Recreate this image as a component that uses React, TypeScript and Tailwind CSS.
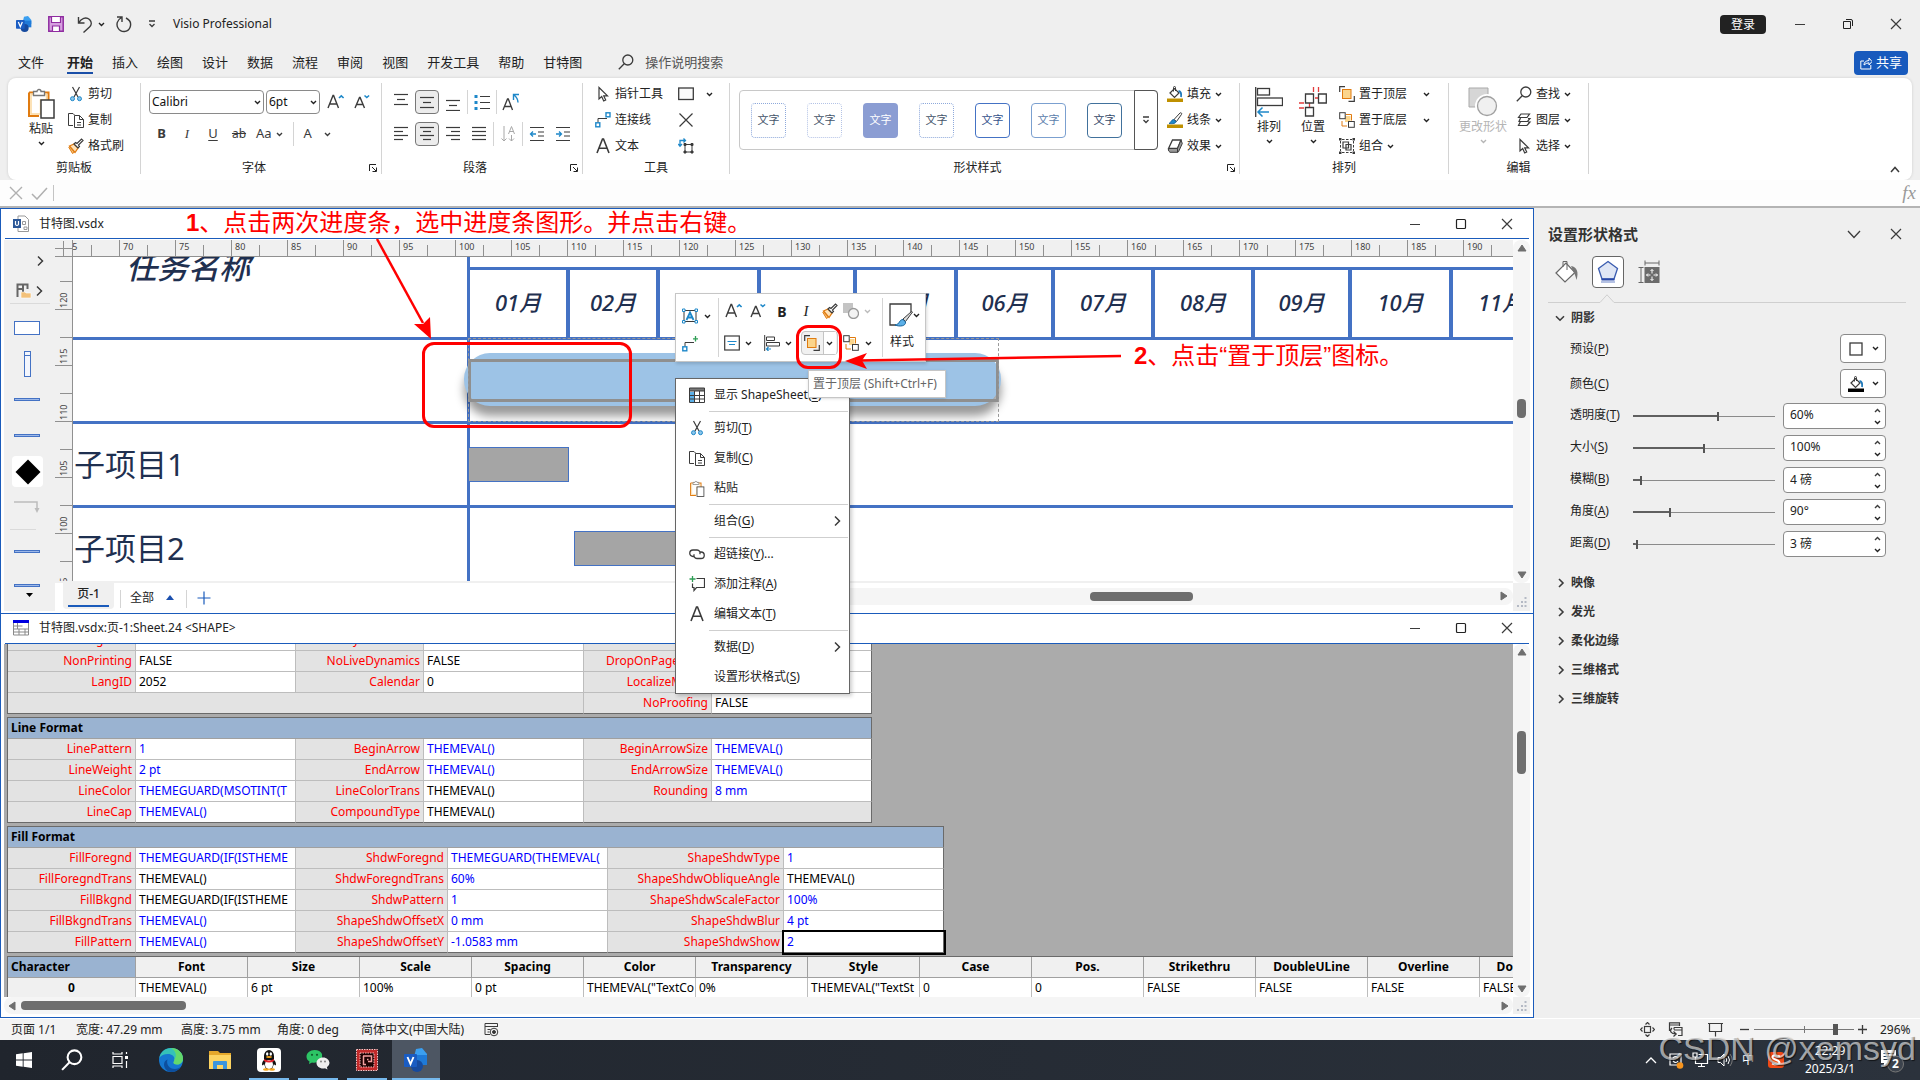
import React from "react";

type Kids = { children?: React.ReactNode };

/* ---------- small drawing helpers ---------- */
function Svg({ w = 16, h = 16, vb, className = "", children }: Kids & { w?: number; h?: number; vb?: string; className?: string }) {
  return (
    <svg width={w} height={h} viewBox={vb ?? `0 0 ${w} ${h}`} fill="none" stroke="#3b3b3b" aria-hidden="true" className={`block shrink-0 ${className}`}>
      {children}
    </svg>
  );
}
const Caret = ({ className = "" }: { className?: string }) => (
  <Svg w={7} h={5} className={className}><path d="M1 1l2.500 2.500L6 1" stroke="currentColor" strokeWidth="1.400" /></Svg>
);
const CaretUp = () => <Svg w={7} h={5}><path d="M1 4l2.500-2.500L6 4" strokeWidth="1.400" /></Svg>;
const ChevR = () => <Svg w={7} h={12}><path d="M1 1.500l4.500 4.500L1 10.500" strokeWidth="1.500" /></Svg>;

const Cut = () => (
  <Svg><path d="M4.500 1l5.500 10M11.500 1L6 11" strokeWidth="1.200" /><circle cx="4.500" cy="12.700" r="2" stroke="#1e88c9" fill="#8cc5ea" /><circle cx="11.500" cy="12.700" r="2" stroke="#1e88c9" fill="#8cc5ea" /></Svg>
);
const Copy = () => (
  <Svg><path d="M5 13.500H.5v-12H5l2 2" /><path d="M6.500 3.500h5l4 4v8h-9zM11.500 3.500v4h4M9 10.500h4M9 13h4" fill="#fff" /></Svg>
);
const Brush = () => (
  <Svg><path d="M1.500 8.500l5 5.500-2 1.500L.8 9.200z" fill="#f7c37b" stroke="#e07b10" /><path d="M1.500 8l4.500-2 4 4-3 4.500z" fill="#ffe2b8" stroke="#e07b10" strokeWidth="1.300" /><path d="M6 6l4 4 1.500-1.500L10.500 7 15 2.500 13.500 1 9 5.500 7.500 4.500z" fill="#fff" strokeWidth="1.200" /></Svg>
);
const PasteBig = ({ w = 28, h = 32 }: { w?: number; h?: number }) => (
  <Svg w={w} h={h} vb="0 0 28 32">
    <path d="M2 5.500h19.500V14M12 29H2V5.500" stroke="#e07b10" strokeWidth="2" />
    <path d="M4 7.500h15.500V13h-6v14H4z" fill="#fff" stroke="#fbd9a0" strokeWidth="1.500" />
    <path d="M6.500 8.500V4.500h3.500a2 2 0 0 1 4 0h3.500v4z" fill="#fff" stroke="#777" strokeWidth="1.300" />
    <rect x="14" y="13" width="13" height="18" fill="#fff" strokeWidth="1.500" />
  </Svg>
);
const LetterA = () => <Svg><path d="M2 15L7.500 1h1L14 15M4 10.300h8" strokeWidth="1.600" /></Svg>;
const AGrow = ({ down = false }: { down?: boolean }) => (
  <Svg w={18} h={18}>
    <path d={down ? "M2 15L6.500 4.500h.6L11.500 15M3.700 11.500h6" : "M1 15L6 2.500h.6L11.500 15M2.700 11h7"} strokeWidth="1.400" />
    <path d={down ? "M11.500 2.500l2.300 2 2.300-2" : "M12 5l2.300-2.200L16.600 5"} stroke="#1e88c9" strokeWidth="1.600" />
  </Svg>
);
const Pointer = () => <Svg><path d="M4 1.500v11.500l2.700-2.500 2 4.500 2-1-2-4.200h3.800z" fill="#fff" strokeWidth="1.200" /></Svg>;
const Connector = ({ plus = false }: { plus?: boolean }) => (
  <Svg><path d="M3 10.500v-4h9" /><rect x=".8" y="10.800" width="4" height="4" stroke="#1e88c9" strokeWidth="1.400" />
    {plus ? <path d="M13.500 0v5.500M11 2.800h5" stroke="#2f9e55" strokeWidth="1.300" /> : <rect x="11" y=".8" width="4" height="4" stroke="#1e88c9" strokeWidth="1.400" />}
  </Svg>
);
const Front = () => (
  <Svg><path d="M.7 6V.7H6M9.500 15.300h5.800V10" strokeWidth="1.200" /><rect x="3.500" y="3.500" width="8.500" height="9" fill="#fbd58c" stroke="#e07b10" /></Svg>
);
const Back = () => (
  <Svg><path d="M7 2.500h5.500v6M3 9v5h5" fill="none" stroke="#e07b10" /><rect x="6" y="4" width="5.500" height="6" fill="#fbd58c" stroke="none" /><rect x=".7" y=".7" width="5.500" height="6" fill="#fff" /><rect x="9.500" y="9.500" width="5.800" height="5.800" fill="#fff" /></Svg>
);
const Bucket = ({ bar }: { bar: string }) => (
  <Svg><path d="M3 7l4.500-4.500L12 7l-4.500 4.500z" fill="#fff" strokeWidth="1.200" /><path d="M6.500 5.500V1.500a1 1 0 0 1 2 0V5" /><path d="M11.500 5c2.500.5 3 3 2.500 6" stroke="#1e78b9" strokeWidth="1.800" /><path d="M0 12.500h16V16H0z" fill={bar} stroke="none" /></Svg>
);
const Pen = () => (
  <Svg><path d="M7 7.500L13 1c1-.8 2.200.3 1.500 1.400L9.500 9.500z" fill="#fff" /><path d="M6.500 7.500l2.500 2c0 2-3.500 2.500-7 2 2-.7 2-3.500 4.500-4z" fill="#1e88c9" stroke="#16639a" /><path d="M0 12.500h16V16H0z" fill="#bf9000" stroke="none" /></Svg>
);
const Effect = () => (
  <Svg><path d="M5.500 2h8.500l-3.500 8.500H1.500z" fill="#fff" strokeWidth="1.300" /><path d="M1.500 10.500h9v3.800H3q-2-.8-1.500-3.800zM14 2l1.300 3.500-3.800 8.300-1 .5v-3.800z" fill="#9a9a9a" /></Svg>
);
const Glass = ({ size = 16, stroke = "#3b3b3b", sw = 1.3 }: { size?: number; stroke?: string; sw?: number }) => (
  <Svg w={size} h={size} vb="0 0 16 16"><circle cx="9.800" cy="6" r="5" stroke={stroke} strokeWidth={sw} /><path d="M6.200 9.700L.8 15.200" stroke={stroke} strokeWidth={sw} /></Svg>
);
const Layers = () => <Svg><path d="M5 2h8.500L11 5.500H2.500zM4.500 6L3 9.500h8.500L14 6.500h-2M4.500 9.500L2.500 13.500H11L14 10h-2" strokeWidth="1.200" /></Svg>;
const GroupIco = () => (
  <Svg><path d="M1.500 3v10M14.500 3v10M3 1.500h10M3 14.500h10" strokeDasharray="2.500 1.500" /><path d="M4 4h5.500v6H4zM7 6.500h5V12H7z" strokeWidth="1.200" /><path d="M0 0h2.500v2.500H0zM13.500 0H16v2.500h-2.500zM0 13.500h2.500V16H0zM13.500 13.500H16V16h-2.500z" fill="#3b3b3b" stroke="none" /></Svg>
);
const Lines = ({ w, y = 0, gap = 4 }: { w: [number, number][]; y?: number; gap?: number }) => (
  <Svg w={16} h={18}>{w.map(([a, b], i) => <path key={i} d={`M${a} ${y + 1.5 + i * gap}H${b}`} strokeWidth="1.200" />)}</Svg>
);
const Visio = ({ s = 16 }: { s?: number }) => (
  <Svg w={s} h={s} vb="0 0 24 24"><g stroke="none"><path d="M12 1l6-1 5 6v6l-6 3-7-6z" fill="#3b9ff0" /><path d="M12 7h11v10H12z" fill="#1f7ad8" /><circle cx="13" cy="18" r="6" fill="#164a9e" /><rect y="6" width="13" height="13" rx="1" fill="#1a5cc2" /></g><path d="M3.500 9l3 7 3-7" stroke="#fff" strokeWidth="1.900" /></Svg>
);
const Min = () => <Svg w={12} h={12}><path d="M1 6.500h10" /></Svg>;
const Close = ({ s = 12 }: { s?: number }) => <Svg w={s} h={s} vb="0 0 12 12"><path d="M1 1l10 10M11 1L1 11" strokeWidth="1.200" /></Svg>;
const Max = () => <Svg w={12} h={12}><rect x="1.500" y="1.500" width="9" height="9" rx="1" stroke="#222" strokeWidth="1.200" /></Svg>;
const Tri = ({ dir }: { dir: "u" | "d" | "l" | "r" }) => (
  <Svg w={10} h={10}><path stroke="#6e6e6e" strokeLinejoin="round" fill="#6e6e6e" d={{ u: "M5 2l4 6H1z", d: "M5 8l4-6H1z", l: "M2 5l6-4v8z", r: "M8 5L2 1v8z" }[dir]} /></Svg>
);
const Grip = () => (
  <Svg w={12} h={12}><g fill="#b4b9c4" stroke="none"><path d="M8.500 1h2v2h-2zM8.500 5h2v2h-2zM8.500 9h2v2h-2zM5 5h2v2H5zM5 9h2v2H5zM1 9h2v2H1z" /></g></Svg>
);

/* ---------- ribbon ---------- */
function Group({ title, width, launcher, children }: Kids & { title: string; width: string; launcher?: boolean }) {
  return (
    <section className={`flex h-[91px] shrink-0 flex-col border-r border-[#d4d4d4] ${width}`}>
      <div className="flex h-[77px] shrink-0">{children}</div>
      <h2 className={`relative text-center leading-4 ${launcher ? "pr-[14px]" : ""}`}>
        {title}
        {launcher && (
          <button aria-label={title + "设置"} className="absolute right-1 top-1"><Svg w={8} h={8}><path d="M.5 7V.5H7M3 3l4 4M7.500 3.500v4h-4" stroke="#222" /></Svg></button>
        )}
      </h2>
    </section>
  );
}
function Cmd({ icon, label, caret, wide }: { icon: React.ReactNode; label: string; caret?: boolean; wide?: boolean }) {
  return (
    <button className="flex h-[22px] items-center gap-1 whitespace-nowrap">
      {icon}<span>{label}</span>{caret && <Caret className={wide ? "ml-3" : ""} />}
    </button>
  );
}
const Stack = ({ className = "", children }: Kids & { className?: string }) => <div className={`flex flex-col items-start gap-1 ${className}`}>{children}</div>;
const IcoBtn = ({ label, on, className = "w-6", children }: Kids & { label: string; on?: boolean; className?: string }) => (
  <button aria-label={label} className={`flex h-6 items-center justify-center ${on ? "rounded border border-[#777] bg-[#ececec]" : ""} ${className}`}>{children}</button>
);
const Bar = () => <span className="mx-[2px] h-6 w-px bg-[#d4d4d4]" />;

const swatches = [
  "border border-dotted border-[#8ea9db] text-[#44546a]",
  "border border-dotted border-[#b4c3e6] text-[#44546a]",
  "bg-[#8b9dd3] text-white",
  "border border-dotted border-[#8ea9db] text-[#44546a]",
  "border border-[#4472c4] text-[#34528c]",
  "border border-[#7ba0d0] text-[#5b7dab]",
  "border border-[#41719c] text-[#34496a]",
];

function Ribbon() {
  return (
    <div className="mx-2 flex h-[102px] items-start rounded-lg bg-white pt-[5px] shadow-[0_0_3px_rgba(0,0,0,0.15)]">
      <Group title="剪贴板" width="w-[133px]">
        <button className="ml-[15px] mt-1 flex w-9 flex-col items-center self-start">
          <PasteBig /><span className="mt-[2px] leading-4">粘贴</span><Caret className="mt-1" />
        </button>
        <Stack className="ml-[9px]"><Cmd icon={<Cut />} label="剪切" /><Cmd icon={<Copy />} label="复制" /><Cmd icon={<Brush />} label="格式刷" /></Stack>
      </Group>
      <Group title="字体" width="w-[241px]" launcher>
        <div className="flex flex-col gap-2 pl-2 pt-[7px]">
          <div className="flex items-center gap-[2px]">
            <span className="relative">
              <select aria-label="字体" className="block h-6 w-[115px] appearance-none rounded border border-[#8a8a8a] bg-white pl-[2px] text-[12px] text-[#111]"><option>Calibri</option></select>
              <Caret className="pointer-events-none absolute right-[3px] top-[10px]" />
            </span>
            <span className="relative">
              <select aria-label="字号" className="block h-6 w-[54px] appearance-none rounded border border-[#8a8a8a] bg-white pl-[2px] text-[12px] text-[#111]"><option>6pt</option></select>
              <Caret className="pointer-events-none absolute right-[3px] top-[10px]" />
            </span>
            <button aria-label="增大字号" className="ml-[5px]"><AGrow /></button>
            <button aria-label="减小字号" className="ml-[6px]"><AGrow down /></button>
          </div>
          <div className="flex h-6 items-center text-[13px] text-[#3b3b3b]">
            <IcoBtn label="加粗" className="w-[25px] font-bold">B</IcoBtn>
            <IcoBtn label="倾斜" className="w-[26px]"><i className="font-['Liberation_Serif']">I</i></IcoBtn>
            <IcoBtn label="下划线" className="w-[26px] underline underline-offset-2">U</IcoBtn>
            <IcoBtn label="删除线" className="w-[26px] text-[12px] line-through">ab</IcoBtn>
            <button className="ml-1 flex items-center gap-1">Aa<Caret /></button>
            <span className="mx-[10px] h-6 w-px bg-[#d4d4d4]" />
            <button aria-label="字体颜色" className="flex items-center gap-3">A<Caret /></button>
          </div>
        </div>
      </Group>
      <Group title="段落" width="w-[201px]" launcher>
        <div className="flex flex-col gap-2 pl-[7px] pt-[7px]">
          <div className="flex items-center">
            <div className="flex gap-[2px]">
              <IcoBtn label="顶端对齐"><Lines w={[[1, 15], [4, 12], [1, 15]]} gap={5} /></IcoBtn>
              <IcoBtn label="中部对齐" on><Lines w={[[1, 15], [4, 12], [1, 15]]} y={3} gap={5} /></IcoBtn>
              <IcoBtn label="底端对齐"><Lines w={[[1, 15], [4, 12], [1, 15]]} y={6} gap={5} /></IcoBtn>
            </div>
            <Bar />
            <IcoBtn label="项目符号"><Svg w={16} h={16}><path d="M6 2.500h10M6 8.500h10M6 14.500h10" strokeWidth="1.200" /><path d="M.5 1h3v3h-3zM.5 7h3v3h-3zM.5 13h3v3h-3z" fill="#1e88c9" stroke="none" /></Svg></IcoBtn>
            <Bar />
            <IcoBtn label="旋转文字"><Svg w={18} h={18}><path d="M1 17L5.500 6h.8L10.500 17M2.500 13.500h6.500" strokeWidth="1.300" /><path d="M16 9.500c0-3-1-5-4-7.500M17 1.500h-5.500V7" stroke="#1e88c9" strokeWidth="1.400" /></Svg></IcoBtn>
          </div>
          <div className="flex items-center">
            <div className="flex gap-[2px]">
              <IcoBtn label="左对齐"><Lines w={[[1, 15], [1, 10], [1, 15], [1, 10]]} y={1} /></IcoBtn>
              <IcoBtn label="居中" on><Lines w={[[1, 15], [4, 12], [1, 15], [4, 12]]} y={1} /></IcoBtn>
              <IcoBtn label="右对齐"><Lines w={[[1, 15], [6, 15], [1, 15], [6, 15]]} y={1} /></IcoBtn>
              <IcoBtn label="两端对齐"><Lines w={[[1, 15], [1, 15], [1, 15], [1, 15]]} y={1} /></IcoBtn>
            </div>
            <Bar />
            <IcoBtn label="文字方向"><Svg><path d="M4 0v15M1.500 12.500L4 15l2.500-2.500M11.500 9v6M9 12.500l2.500 2.500 2.500-2.500M8.500 8l3-7.500L14.500 8M9.500 5.500h4" stroke="#a8a8a8" /></Svg></IcoBtn>
            <Bar />
            <IcoBtn label="减少缩进"><Svg><path d="M1 1.500h14M9 6h6M9 10h6M1 14.500h14" strokeWidth="1.200" /><path d="M7 8H1.500M4 5.500L1.500 8 4 10.500" stroke="#1e88c9" strokeWidth="1.300" /></Svg></IcoBtn>
            <IcoBtn label="增加缩进" className="ml-[2px] w-6"><Svg><path d="M1 1.500h14M9 6h6M9 10h6M1 14.500h14" strokeWidth="1.200" /><path d="M1 8h5.500M4 5.500L6.500 8 4 10.500" stroke="#1e88c9" strokeWidth="1.300" /></Svg></IcoBtn>
          </div>
        </div>
      </Group>
      <Group title="工具" width="w-[147px]">
        <Stack className="w-[95px] pl-3"><Cmd icon={<Pointer />} label="指针工具" /><Cmd icon={<Connector />} label="连接线" /><Cmd icon={<LetterA />} label="文本" /></Stack>
        <Stack>
          <button aria-label="矩形" className="flex h-[22px] items-center gap-3"><Svg><rect x=".7" y="2" width="14.600" height="11.500" fill="#fafafa" strokeWidth="1.300" /></Svg><Caret /></button>
          <button aria-label="连接点" className="flex h-[22px] items-center"><Svg><path d="M1.500 1.500l13 13M14.500 1.500l-13 13" strokeWidth="1.200" /></Svg></button>
          <button aria-label="文本块" className="flex h-[22px] items-center"><Svg><path d="M7 6.500h7v7.500H7z" /><path d="M6 5.500h2v2H6zM13 5.500h2v2h-2zM6 13h2v2H6zM13 13h2v2h-2z" fill="#3b3b3b" /><path d="M2 8V2.500h5M.2 6L2 8.200 4 6M5.500.5L7.500 2.500l-2 2" stroke="#1e88c9" strokeWidth="1.300" /></Svg></button>
        </Stack>
      </Group>
      <Group title="形状样式" width="w-[510px]" launcher>
        <div className="ml-[9px] mt-[7px] flex h-[60px] w-[419px] rounded border border-[#c8c8c8]">
          <div className="flex flex-1 items-center gap-[21px] pl-[11px]">
            {swatches.map((c, i) => <button key={i} className={`h-[35px] w-[35px] rounded text-[11px] ${c}`}>文字</button>)}
          </div>
          <button aria-label="更多样式" className="-my-px -mr-px flex w-6 items-center justify-center rounded-r border border-[#555]"><Svg w={8} h={8}><path d="M1 1h6M1.500 4l2.500 2.500L6.500 4" strokeWidth="1.300" /></Svg></button>
        </div>
        <Stack className="ml-[9px]"><Cmd icon={<Bucket bar="#bf9000" />} label="填充" caret /><Cmd icon={<Pen />} label="线条" caret /><Cmd icon={<Effect />} label="效果" caret /></Stack>
      </Group>
      <Group title="排列" width="w-[209px]">
        <button className="ml-[13px] mt-1 flex w-8 flex-col items-center self-start">
          <Svg w={28} h={30}><path d="M.7 0v30" strokeWidth="1.300" /><rect x="2.500" y="1.500" width="12" height="6.500" strokeWidth="1.300" /><rect x="2.500" y="11" width="25" height="7.500" strokeWidth="1.300" /><path d="M14 25H3M7.500 20.500L3 25l4.500 4.500" stroke="#1e88c9" strokeWidth="1.500" /></Svg>
          <span className="mt-[2px] leading-4">排列</span><Caret className="mt-1" />
        </button>
        <button className="ml-3 mt-1 flex w-8 flex-col items-center self-start">
          <Svg w={28} h={30}><path d="M14.500 0v5M19.500 0v5M0 16h5M0 21h5M16 11h3M10.500 16v4" stroke="#e23b3b" strokeWidth="1.300" /><path d="M6.500 7h8v9h-8zM19.500 7h7.800v9h-7.800zM6.500 20.500h8V29h-8z" fill="#fff" strokeWidth="1.300" /></Svg>
          <span className="mt-[2px] leading-4">位置</span><Caret className="mt-1" />
        </button>
        <Stack className="ml-[10px]"><Cmd icon={<Front />} label="置于顶层" caret wide /><Cmd icon={<Back />} label="置于底层" caret wide /><Cmd icon={<GroupIco />} label="组合" caret /></Stack>
      </Group>
      <Group title="编辑" width="w-[140px]">
        <button disabled className="ml-2 mt-1 flex w-[52px] flex-col items-center self-start text-[#b5b5b5]">
          <Svg w={30} h={30}><path d="M1 1h19v19H1z" fill="#d6d6d6" stroke="#a9a9a9" /><circle cx="19" cy="19" r="10.500" fill="#f3f3f3" stroke="#fff" strokeWidth="3" /><circle cx="19" cy="19" r="9.500" fill="#f0f0f0" stroke="#a0a0a0" strokeWidth="1.300" /></Svg>
          <span className="mt-[2px] whitespace-nowrap leading-4">更改形状</span><Caret className="mt-1" />
        </button>
        <Stack className="ml-[7px]"><Cmd icon={<Glass />} label="查找" caret /><Cmd icon={<Layers />} label="图层" caret /><Cmd icon={<Pointer />} label="选择" caret /></Stack>
      </Group>
      <button aria-label="折叠功能区" className="mb-[7px] ml-auto mr-3 self-end"><Svg w={10} h={7}><path d="M1 6l4-4.500L9 6" strokeWidth="1.500" /></Svg></button>
    </div>
  );
}

/* ---------- drawing window ---------- */
function WinTitle({ icon, title }: { icon: React.ReactNode; title: string }) {
  return (
    <div className="mx-1 flex h-[30px] shrink-0 items-center border-b border-[#1a5bbb] pl-2">
      {icon}<h2 className="ml-[10px] text-[12px]">{title}</h2>
      <div className="ml-auto mr-4 flex gap-[34px]">
        <button aria-label="最小化"><Min /></button><button aria-label="最大化"><Max /></button><button aria-label="关闭"><Close /></button>
      </div>
    </div>
  );
}

const hMarks = Array.from({ length: 27 }, (_, i) => 65 + i * 5);
const vMarks = [120, 115, 110, 105, 100, 95];

function VScroll({ thumb }: { thumb: string }) {
  return (
    <div className="relative flex w-[17px] shrink-0 flex-col items-center justify-between rounded-lg bg-[#f5f5f5] py-[3px]">
      <Tri dir="u" /><span className={`absolute w-[9px] rounded bg-[#6e6e6e] ${thumb}`} /><Tri dir="d" />
    </div>
  );
}

const monthX = [397, 497, 587, 688, 784, 885, 982, 1082, 1182, 1279, 1380, 1480];
const months = ["01月", "02月", "03月", "04月", "05月", "06月", "07月", "08月", "09月", "10月", "11月"];

function Canvas() {
  return (
    <div className="relative flex-1 overflow-hidden bg-white text-[#1f3050]">
      <span className="absolute left-[53px] top-[-12px] text-[31px] leading-[44px] font-medium italic">任务名称</span>
      <div className="absolute left-[394px] right-0 top-[10px] h-[73px] border-y-[3px] border-[#4472c4]" />
      <div className="absolute left-0 right-0 top-[80px] h-[3px] bg-[#4472c4]" />
      <div className="absolute left-0 right-0 top-[164px] h-[3px] bg-[#4472c4]" />
      <div className="absolute left-0 right-0 top-[248px] h-[3px] bg-[#4472c4]" />
      <div className="absolute bottom-0 left-[394px] top-0 w-[3px] bg-[#4472c4]" />
      {months.map((m, i) => (
        <span key={m} style={{ left: monthX[i], width: monthX[i + 1] - monthX[i] }} className="absolute top-[11px] flex h-[69px] items-center justify-center border-r-4 border-[#4472c4] text-[22px] font-medium italic">{m}</span>
      ))}
      <div className="absolute left-[391px] top-[96px] h-[53px] w-[537px] rounded-[26px] bg-[#9dc3e6] shadow-[0_10px_10px_rgba(0,0,0,0.4)]" />
      <div className="absolute left-[395px] top-[102px] h-[43px] w-[531px] border-[3px] border-[#8f8f8f]" />
      <div className="absolute left-[395px] top-[81px] h-[84px] w-[531px] border border-dashed border-[#999]" />
      <div className="absolute left-[395px] top-[190px] h-[35px] w-[101px] border border-[#4472c4] bg-[#a5a5a5]" />
      <div className="absolute left-[501px] top-[274px] h-[35px] w-[150px] border border-[#4472c4] bg-[#a5a5a5]" />
      <span className="absolute left-px top-[185px] text-[31px] leading-[44px]">子项目1</span>
      <span className="absolute left-px top-[269px] text-[31px] leading-[44px]">子项目2</span>
    </div>
  );
}

function Stencils() {
  const bar = "h-[3px] w-[26px] border border-[#4472c4] bg-[#9db8e8]";
  return (
    <div className="flex w-[51px] shrink-0 flex-col items-start bg-[#f0f0f0] pl-[10px]">
      <button aria-label="展开形状窗口" className="ml-[23px] mt-[15px]"><ChevR /></button>
      <button aria-label="更多形状" className="ml-[2px] mt-4 flex items-center gap-1">
        <Svg><path d="M1.500 14V1.500h10V6M1.500 6H7v4M7 1.500V6" stroke="#666" strokeWidth="2" /><path d="M5 15V9h4l1 1h5v5z" fill="#f3c17a" stroke="#fff" strokeWidth=".6" /></Svg><ChevR />
      </button>
      <hr className="-ml-1 mt-1 w-10 border-[#dadada]" />
      <span className="mt-[17px] h-[14px] w-[26px] border border-[#4472c4] bg-white" />
      <span className="ml-[10px] mt-4 h-[26px] w-[7px] border border-[#4472c4] bg-[#f3f6fd] pt-[3px]"><span className="block h-px bg-[#4472c4]" /></span>
      <span className={`mt-[21px] ${bar}`} />
      <span className={`mt-[33px] ${bar}`} />
      <span className="-ml-[2px] mt-[19px] flex h-[31px] w-[31px] items-center justify-center rounded bg-white"><Svg w={26} h={26}><path d="M13 .5L25.500 13 13 25.500.5 13z" fill="#000" stroke="none" /></Svg></span>
      <Svg w={26} h={14} className="mt-[13px]"><path d="M0 2h23v7" stroke="#bcbcbc" strokeWidth="1.500" /><path d="M20.500 8h5L23 13z" fill="#bcbcbc" stroke="none" /></Svg>
      <hr className="-ml-1 mt-[15px] w-[26px] border-[#dadada]" />
      <span className={`mt-[20px] ${bar}`} />
      <span className={`mt-[31px] ${bar}`} />
      <Svg w={7} h={5} className="ml-[12px] mt-[6px]"><path d="M0 0h7L3.500 4z" fill="#000" stroke="none" /></Svg>
    </div>
  );
}

function DrawingWindow() {
  return (
    <section className="flex min-h-0 flex-1 flex-col border-x border-t border-[#1a5bbb] bg-white">
      <WinTitle title="甘特图.vsdx" icon={<Svg w={16} h={17}><path d="M5 1h7l3.500 3.500V16.500H5z" fill="#fff" stroke="#999" /><path d="M9.500 6.500h3v3h-3zM11 12h3v2.500h-3z" stroke="#999" /><path d="M0 4h8v9H0z" fill="#2b5797" stroke="none" /><path d="M2.500 6v3.500q1.500 2 3 0V6" stroke="#fff" strokeWidth="1.200" /></Svg>} />
      <div className="mx-[3px] mb-[2px] flex min-h-0 flex-1 pt-px">
        <Stencils />
        <div className="flex min-w-0 flex-1 flex-col">
          <div className="flex min-h-0 flex-1 bg-[#f0f0f0]">
            <div className="flex w-[18px] shrink-0 flex-col border-r border-[#909090]">
              <Svg w={17} h={17} className="shrink-0"><path d="M0 8.500h17M8.500 1v15M0 16.500h17" stroke="#909090" /></Svg>
              <div className="min-h-0 flex-1 overflow-hidden">
                <div className="-mt-[3px]">
                  {vMarks.map((v) => (
                    <div key={v} className="h-14 border-b border-[#909090] text-[9px] leading-[10px] text-[#444]">
                      <div className="ml-[5px] h-7 border-b border-[#909090]" />
                      <span className="ml-1 mt-2 block h-[18px] rotate-180 text-left [writing-mode:vertical-rl]">{v}</span>
                    </div>
                  ))}
                </div>
              </div>
            </div>
            <div className="flex min-w-0 flex-1 flex-col">
              <div className="h-[17px] shrink-0 overflow-hidden border-b border-[#909090]">
                <div className="-ml-[10px] flex">
                  {hMarks.map((v) => (
                    <div key={v} className="flex h-4 w-14 shrink-0 border-l border-[#909090] text-[9px] leading-[14px] text-[#444]">
                      <span className="w-[27px] pl-[3px]">{v}</span><span className="mt-[5px] border-l border-[#909090]" />
                    </div>
                  ))}
                </div>
              </div>
              <Canvas />
            </div>
          </div>
          <div className="flex h-[30px] shrink-0 items-start border-t-2 border-[#f0f0f0]">
            <button className="ml-2 flex h-[26px] w-[51px] flex-col items-center rounded-b bg-[#f0f0f0] pt-[2px] font-medium"><span className="leading-[18px]">页-1</span><span className="mt-[2px] h-[2px] w-[41px] bg-[#1a5bbb]" /></button>
            <span className="ml-[6px] mt-[7px] h-[18px] w-px bg-[#d4d4d4]" />
            <button className="ml-[9px] mt-[6px] flex items-center gap-3 leading-[18px]">全部<Svg w={8} h={5}><path d="M4 0l4 5H0z" fill="#1a4fae" stroke="none" /></Svg></button>
            <span className="ml-3 mt-[7px] h-[18px] w-px bg-[#d4d4d4]" />
            <button aria-label="插入页" className="ml-[10px] mt-2"><Svg w={14} h={14}><path d="M7 .5v13M.5 7h13" stroke="#1a5bbb" strokeWidth="1.200" /></Svg></button>
            <div className="relative ml-[465px] mt-[5px] flex h-[17px] flex-1 items-center justify-end rounded-r-lg bg-[#f5f5f5] pr-1">
              <span className="absolute right-[320px] top-1 h-[9px] w-[103px] rounded bg-[#6e6e6e]" /><Tri dir="r" />
            </div>
          </div>
        </div>
        <div className="flex w-[17px] flex-col"><div className="flex flex-1 *:flex-1"><VScroll thumb="top-[159px] h-[19px]" /></div><div className="flex h-[28px] items-end justify-center bg-[#f0f0f0] pb-[3px]"><Grip /></div></div>
      </div>
    </section>
  );
}

/* ---------- ShapeSheet window ---------- */
type Cell = [string, string, string?]; // label, value, flag: "b" blue formula, "s" selected
const Lab = ({ t }: { t: string }) => <th scope="row" className="border-b border-r border-[#bdbdbd] bg-[#e3e3e3] pr-[3px] text-right font-normal text-[#ff0000]">{t}</th>;
const Val = ({ t, blue, sel }: { t: string; blue?: boolean; sel?: boolean }) => (
  <td className={`overflow-hidden whitespace-nowrap border-b border-r border-[#bdbdbd] bg-white pl-[3px] ${blue ? "text-[#0000ff]" : "text-black"} ${sel ? "outline-2 outline-black" : ""}`}>{t}</td>
);
function Sheet({ title, cols, rows, width }: { title?: string; cols: number[]; rows: (Cell | number)[][]; width: string }) {
  return (
    <table className={`shrink-0 table-fixed border-separate border-spacing-0 border-l border-t border-[#6a6a6a] ${width}`}>
      <colgroup>{cols.map((c, i) => <col key={i} style={{ width: c }} />)}</colgroup>
      {title && <thead><tr className="h-[21px]"><th colSpan={6} className="border-b border-r border-b-[#a0a0a0] border-r-[#6a6a6a] bg-[#9ab3d1] pl-[3px] text-left font-bold text-black">{title}</th></tr></thead>}
      <tbody className="[&>tr:last-child>*]:border-b-[#6a6a6a] [&>tr>*:last-child]:border-r-[#6a6a6a]">
        {rows.map((r, i) => (
          <tr key={i} className="h-[21px] leading-[18px]">
            {r.map((c, j) => typeof c === "number"
              ? <td key={j} colSpan={c} className="border-b border-r border-[#bdbdbd] bg-[#e3e3e3]" />
              : <React.Fragment key={j}><Lab t={c[0]} /><Val t={c[1]} blue={c[2] === "b" || c[2] === "s"} sel={c[2] === "s"} /></React.Fragment>)}
          </tr>
        ))}
      </tbody>
    </table>
  );
}
const misc: (Cell | number)[][] = [
  [["NoAlignBox", "FALSE"], ["DynFeedback", "0"], ["Comment", ""]],
  [["NonPrinting", "FALSE"], ["NoLiveDynamics", "FALSE"], ["DropOnPageScale", "100%"]],
  [["LangID", "2052"], ["Calendar", "0"], ["LocalizeMerge", "FALSE"]],
  [4, ["NoProofing", "FALSE"]],
];
const line: (Cell | number)[][] = [
  [["LinePattern", "1", "b"], ["BeginArrow", "THEMEVAL()", "b"], ["BeginArrowSize", "THEMEVAL()", "b"]],
  [["LineWeight", "2 pt", "b"], ["EndArrow", "THEMEVAL()", "b"], ["EndArrowSize", "THEMEVAL()", "b"]],
  [["LineColor", "THEMEGUARD(MSOTINT(T", "b"], ["LineColorTrans", "THEMEVAL()"], ["Rounding", "8 mm", "b"]],
  [["LineCap", "THEMEVAL()", "b"], ["CompoundType", "THEMEVAL()"], 2],
];
const fill: (Cell | number)[][] = [
  [["FillForegnd", "THEMEGUARD(IF(ISTHEME", "b"], ["ShdwForegnd", "THEMEGUARD(THEMEVAL(", "b"], ["ShapeShdwType", "1", "b"]],
  [["FillForegndTrans", "THEMEVAL()"], ["ShdwForegndTrans", "60%", "b"], ["ShapeShdwObliqueAngle", "THEMEVAL()"]],
  [["FillBkgnd", "THEMEGUARD(IF(ISTHEME"], ["ShdwPattern", "1", "b"], ["ShapeShdwScaleFactor", "100%", "b"]],
  [["FillBkgndTrans", "THEMEVAL()", "b"], ["ShapeShdwOffsetX", "0 mm", "b"], ["ShapeShdwBlur", "4 pt", "b"]],
  [["FillPattern", "THEMEVAL()", "b"], ["ShapeShdwOffsetY", "-1.0583 mm", "b"], ["ShapeShdwShow", "2", "s"]],
];
const chars: [string, string][] = [
  ["Font", "THEMEVAL()"], ["Size", "6 pt"], ["Scale", "100%"], ["Spacing", "0 pt"], ["Color", "THEMEVAL(\"TextCo"], ["Transparency", "0%"],
  ["Style", "THEMEVAL(\"TextSt"], ["Case", "0"], ["Pos.", "0"], ["Strikethru", "FALSE"], ["DoubleULine", "FALSE"], ["Overline", "FALSE"], ["DoubleStrike", "FALSE"],
];

function SheetWindow() {
  return (
    <section className="flex min-h-0 flex-1 flex-col border border-[#1a5bbb] bg-white">
      <WinTitle title="甘特图.vsdx:页-1:Sheet.24 <SHAPE>" icon={<Svg><path d="M0 1.500h16" stroke="#0000e0" strokeWidth="3" /><path d="M.5 3v12h15V3M.5 6h9M4.500 3v6M.5 9h15M12 9v6M.5 12h15M6 9v6" stroke="#8a8a8a" /></Svg>} />
      <div className="mx-[3px] mb-[3px] flex min-h-0 flex-1">
        <div className="flex min-w-0 flex-1 flex-col">
          <div className="min-h-0 flex-1 overflow-hidden bg-[#ababab] pl-[3px] text-[12px] leading-[18px]">
            <div className="-mt-[15px] flex flex-col gap-[3px]">
              <Sheet width="w-[865px]" cols={[128, 160, 128, 160, 128, 160]} rows={misc} />
              <Sheet width="w-[865px]" title="Line Format" cols={[128, 160, 128, 160, 128, 160]} rows={line} />
              <Sheet width="w-[937px]" title="Fill Format" cols={[128, 160, 152, 160, 176, 160]} rows={fill} />
              <table className="w-[1585px] table-fixed border-separate border-spacing-0 border-l border-t border-[#6a6a6a] text-black">
                <thead>
                  <tr className="h-[21px]">
                    <th className="w-[128px] border-b border-r border-[#a0a0a0] bg-[#9ab3d1] pl-[3px] text-left">Character</th>
                    {chars.map(([h]) => <th key={h} className="overflow-hidden border-b border-r border-[#a0a0a0] bg-[#f0f0f0]">{h}</th>)}
                  </tr>
                </thead>
                <tbody>
                  <tr className="h-[21px]">
                    <th scope="row" className="border-b border-r border-[#bdbdbd] bg-[#f0f0f0]">0</th>
                    {chars.map(([h, v]) => <td key={h} className="overflow-hidden whitespace-nowrap border-b border-r border-[#bdbdbd] bg-white pl-[3px]">{v}</td>)}
                  </tr>
                </tbody>
              </table>
            </div>
          </div>
          <div className="relative flex h-[17px] shrink-0 items-center justify-between rounded-lg bg-[#f5f5f5] px-[3px]">
            <Tri dir="l" /><span className="absolute left-[17px] top-1 h-[9px] w-[165px] rounded bg-[#6e6e6e]" /><Tri dir="r" />
          </div>
        </div>
        <div className="flex w-[17px] flex-col"><div className="flex flex-1 *:flex-1"><VScroll thumb="top-[87px] h-[43px]" /></div><div className="flex h-[17px] items-center justify-center bg-[#f0f0f0]"><Grip /></div></div>
      </div>
    </section>
  );
}

/* ---------- floating layers ---------- */
const K = ({ k }: { k: string }) => <>(<u className="underline-offset-2">{k}</u>)</>;
function Item({ icon, t, k, end = "", sub }: { icon?: React.ReactNode; t: string; k?: string; end?: string; sub?: boolean }) {
  return (
    <button role="menuitem" className="flex h-[30px] w-full items-center pl-[13px] pr-2 text-left">
      <span className="w-[25px]">{icon}</span><span className="flex-1 whitespace-nowrap">{t}{k && <K k={k} />}{end}</span>{sub && <ChevR />}
    </button>
  );
}
const Sep = () => <hr className="my-px ml-[33px] mr-px border-[#cfcfcf]" />;

function ContextMenu() {
  return (
    <div role="menu" className="absolute left-[675px] top-[170px] w-[175px] border border-[#666] bg-white py-px text-[12px] text-[#222] shadow-[2px_2px_4px_rgba(0,0,0,0.2)]">
      <Item icon={<Svg><path d="M.5 1.500h15v14H.5z" fill="#fff" /><path d="M.5 1h15v3H.5z" fill="#777" /><path d="M1 5h4.500v10H1z" fill="#5bb0e8" stroke="none" /><path d="M.5 8.500h15M.5 12h15M5.500 4v11.500M10.500 4v11.500" /></Svg>} t="显示 ShapeSheet" k="S" />
      <Sep />
      <Item icon={<Cut />} t="剪切" k="T" /><Item icon={<Copy />} t="复制" k="C" /><Item icon={<PasteBig w={16} h={17} />} t="粘贴" />
      <Sep />
      <Item t="组合" k="G" sub />
      <Sep />
      <Item icon={<Svg><path d="M5 10.500H4A3.200 3.200 0 0 1 4 4h4a3 3 0 0 1 2.800 4.300M11 6h1a3.200 3.200 0 0 1 0 6.500H8a3 3 0 0 1-2.800-4.300" strokeWidth="1.300" /></Svg>} t="超链接" k="Y" end="..." />
      <Item icon={<Svg><path d="M7.500 2.500h8v9h-8L5 14.500v-3H3.500v-4" strokeWidth="1.200" /><path d="M3.500 0v6M.5 3h6" stroke="#2f9e55" strokeWidth="1.300" /></Svg>} t="添加注释" k="A" />
      <Item icon={<LetterA />} t="编辑文本" k="T" />
      <Sep />
      <Item t="数据" k="D" sub /><Item t="设置形状格式" k="S" />
    </div>
  );
}

function MiniToolbar() {
  return (
    <div role="toolbar" aria-label="浮动工具栏" className="absolute left-[675px] top-[85px] flex h-[69px] w-[251px] border border-[#c6c6c6] bg-white py-1 pl-[6px] shadow-[1px_2px_3px_rgba(0,0,0,0.15)]">
      <div className="flex w-[37px] flex-col gap-3 border-r border-[#d4d4d4] pt-[10px]">
        <button aria-label="文本块" className="flex items-center gap-[6px]"><Svg><path d="M2 2.500h12v11H2z" /><path d="M4.500 12L8 4.500 11.500 12M6 9.500h4" stroke="#1e88c9" strokeWidth="1.800" /><path d="M.5 1h2.500v2.500H.5zM13 1h2.500v2.500H13zM.5 12.500h2.500V15H.5zM13 12.500h2.500V15H13z" fill="#fff" stroke="#1e88c9" /></Svg><Caret /></button>
        <button aria-label="连接线"><Connector plus /></button>
      </div>
      <div className="flex flex-1 flex-col gap-[8px] pl-[5px] pt-px">
        <div className="-ml-[3px] flex h-6 items-center">
          <IcoBtn label="增大字号" className="w-[25px]"><AGrow /></IcoBtn>
          <IcoBtn label="减小字号" className="w-[24px]"><AGrow down /></IcoBtn>
          <IcoBtn label="加粗" className="w-6 text-[14px] font-bold">B</IcoBtn>
          <IcoBtn label="倾斜" className="w-6"><i className="font-['Liberation_Serif'] text-[15px]">I</i></IcoBtn>
          <IcoBtn label="格式刷"><Brush /></IcoBtn>
          <button aria-label="更改形状" disabled className="ml-px flex items-center gap-[5px] text-[#bbb]"><Svg><path d="M0 0h10v10H0z" fill="#c4c4c4" stroke="none" /><circle cx="10.500" cy="10.500" r="5" fill="#f3f3f3" stroke="#999" strokeWidth="1.300" /></Svg><Caret /></button>
        </div>
        <div className="flex h-6 items-center">
          <button aria-label="对齐文本" className="flex items-center gap-[5px]"><Svg><rect x=".7" y="1" width="14.600" height="14" strokeWidth="1.200" /><path d="M3.500 6.500h9M5 9.500h6" stroke="#1e88c9" strokeWidth="1.200" /></Svg><Caret /></button>
          <button aria-label="对齐" className="ml-3 flex items-center gap-[5px]"><Svg><path d="M.7 0v16M2.500 2h8v3.500h-8zM2.500 7.500h13v3.500h-13z" /><path d="M7 14H2.500M4.500 12L2.500 14l2 2" stroke="#1e88c9" strokeWidth="1.200" /></Svg><Caret /></button>
          <button aria-label="置于顶层" className="ml-[9px] flex h-6 w-[37px] items-center rounded border border-[#c4c4c4] bg-[#f1f1f1] pl-[2px]"><Front /><span className="ml-[3px] flex h-full items-center border-l border-[#c4c4c4] bg-white pl-[2px] pr-[3px]"><Caret /></span></button>
          <button aria-label="置于底层" className="ml-[5px] flex items-center gap-[6px]"><Back /><Caret /></button>
        </div>
      </div>
      <button className="flex w-[43px] flex-col items-center border-l border-[#d4d4d4] pr-1 pt-[5px]">
        <span className="ml-1 flex items-center"><Svg w={24} h={24}><path d="M22 9V1H1v21h6" strokeWidth="1.300" /><path d="M22.500 8.500L14 16l2.500 2.500 7-9.500z" fill="#ddd" /><path d="M14 16.500c-4 0-3 5-8 5.500 5 2 11 1 10.500-3z" fill="#5bb0e8" stroke="#16639a" /></Svg><Caret /></span>
        <span className="mt-[6px] leading-[18px]">样式</span>
      </button>
    </div>
  );
}

function Annotations() {
  return (
    <div className="pointer-events-none absolute inset-0 font-['Liberation_Sans','Noto_Sans_CJK_SC',sans-serif] text-[24px] leading-[30px] text-[#ff0000]">
      <p className="absolute left-[186px] top-0 whitespace-nowrap"><b>1</b>、点击两次进度条，选中进度条图形。并点击右键。</p>
      <p className="absolute left-[1134px] top-[133px] whitespace-nowrap"><b>2</b>、点击“置于顶层”图标。</p>
      <div className="absolute left-[422px] top-[134px] h-[86px] w-[210px] rounded-[12px] border-[3px] border-[#ff0000]" />
      <div className="absolute left-[796px] top-[117px] h-[44px] w-[46px] rounded-[12px] border-[3px] border-[#ff0000]" />
      <Svg w={70} h={108} className="absolute left-[370px] top-[29px]"><path d="M7 2l46 84" stroke="red" strokeWidth="2.500" /><path d="M61 102L44 87l9 0 7-7z" fill="red" stroke="none" /></Svg>
      <Svg w={280} h={20} className="absolute left-[843px] top-[143px]"><path d="M16 9.500L278 5" stroke="red" strokeWidth="2.500" /><path d="M2 10L24 2l-5 7.500 5 8.500z" fill="red" stroke="none" /></Svg>
    </div>
  );
}

/* ---------- format pane ---------- */
const sliders: [string, string, string, number][] = [["透明度", "T", "60%", 60], ["大小", "S", "100%", 50], ["模糊", "B", "4 磅", 5], ["角度", "A", "90°", 26], ["距离", "D", "3 磅", 2]];

function FormatPane() {
  return (
    <aside className="w-[386px] shrink-0 bg-[#efefef] px-[14px] pt-[14px] text-[12px]">
      <div className="flex h-6 items-center">
        <h2 className="text-[15px] font-bold text-[#333]">设置形状格式</h2>
        <button aria-label="任务窗格选项" className="ml-auto mr-[29px]"><Svg w={14} h={9}><path d="M1 1l6 6.500L13 1" strokeWidth="1.300" /></Svg></button>
        <button aria-label="关闭" className="mr-1"><Close /></button>
      </div>
      <div className="mt-[10px] flex h-8 items-center pl-[7px]">
        <button aria-label="填充与线条"><Svg w={24} h={24}><path d="M1 13L11 3l9 9.500L10 22z" fill="#fff" strokeWidth="1.200" stroke="#666" /><path d="M8 7V1.500h4V10" stroke="#666" /><path d="M16 6c6 1 8 6 5.500 14q-1.500-6-3-8z" fill="#777" stroke="none" /></Svg></button>
        <button aria-label="效果" className="ml-[13px] flex h-8 w-8 items-center justify-center rounded border border-[#666] bg-white"><Svg w={22} h={24}><path d="M11 1.500L20.500 8.500 17 19H5L1.500 8.500z" fill="#dfe6f5" stroke="#3a5cb0" strokeWidth="1.300" /><path d="M4.500 19.500h13" stroke="#2848a8" strokeWidth="2" /><path d="M4 22h14" stroke="#b5c2e4" strokeWidth="2" /></Svg></button>
        <button aria-label="大小与位置" className="ml-[14px]"><Svg w={22} h={24}><path d="M7 .5v5M21 .5v5M7 3h14M.5 7.500h5M.5 22.500h5M3 7.500v15" stroke="#666" /><rect x="6.500" y="7" width="15" height="16" fill="#6b6b6b" stroke="none" /><path d="M14 9.500v4M14 16.500v4M8.500 15h4M15.500 15h4M12.500 11L14 9.500l1.500 1.500M12.500 19l1.500 1.500 1.500-1.500M10 13.500L8.500 15l1.500 1.500M18 13.500l1.500 1.500-1.500 1.500" stroke="#fff" /></Svg></button>
      </div>
      <div className="flex items-end pt-[6px]">
        <span className="h-px w-[52px] bg-[#cfcfcf]" /><Svg w={14} h={9}><path d="M0 8.500L7 .8l7 7.700" stroke="#cfcfcf" /></Svg><span className="h-px flex-1 bg-[#cfcfcf]" />
      </div>
      <button className="mt-[6px] flex h-[18px] items-center gap-[6px] pl-[7px] font-bold text-[#333]"><Svg w={10} h={7}><path d="M1 1.200l4 4 4-4" strokeWidth="1.600" /></Svg>阴影</button>
      <div className="mt-[7px] flex flex-col gap-[6px] pl-[22px] pr-5">
        {[["预设", "P"], ["颜色", "C"]].map(([t, k], i) => (
          <div key={t} className="flex h-[29px] items-center justify-between">
            <label htmlFor={`pane-${k}`}>{t}<K k={k} /></label>
            <button id={`pane-${k}`} className="flex h-[29px] w-[46px] items-center justify-center gap-2 rounded border border-[#8a8a8a] bg-white">
              {i === 0 ? <Svg w={16} h={16}><rect x="2" y="2" width="12" height="12" strokeWidth="1.300" /></Svg> : <Bucket bar="#000" />}<Caret />
            </button>
          </div>
        ))}
      </div>
      <div className="mt-[5px] flex flex-col gap-[6px] pl-[22px] pr-5">
        {sliders.map(([t, k, v, n]) => (
          <div key={t} className="flex h-[26px] items-center">
            <label htmlFor={`pane-${k}`} className="w-[63px] pb-[2px]">{t}<K k={k} /></label>
            <input
              type="range" aria-label={t} defaultValue={n}
              style={{ background: `linear-gradient(#606060,#606060) 0 50%/${n}% 2px no-repeat, linear-gradient(#8a8a8a,#8a8a8a) 0 50%/100% 1px no-repeat` }}
              className="h-[10px] w-[142px] appearance-none [&::-webkit-slider-thumb]:h-[9px] [&::-webkit-slider-thumb]:w-[2px] [&::-webkit-slider-thumb]:appearance-none [&::-webkit-slider-thumb]:bg-[#555]"
            />
            <span className="relative ml-2 flex-1">
              <input id={`pane-${k}`} defaultValue={v} className="block h-[26px] w-full rounded border border-[#8a8a8a] bg-white pb-[3px] pl-[6px]" />
              <span className="absolute right-[5px] top-[5px] flex flex-col gap-[7px]"><CaretUp /><Caret /></span>
            </span>
          </div>
        ))}
      </div>
      <div className="mt-[11px] flex flex-col items-start">
        {["映像", "发光", "柔化边缘", "三维格式", "三维旋转"].map((t) => (
          <button key={t} className="flex h-[29px] items-center gap-[6px] pl-[10px] font-bold text-[#333]"><Svg w={7} h={10}><path d="M1 1l4 4-4 4" strokeWidth="1.600" /></Svg>{t}</button>
        ))}
      </div>
    </aside>
  );
}

/* ---------- status bar and taskbar ---------- */
function StatusBar() {
  return (
    <footer className="flex h-[22px] items-center border-t border-white bg-[#f3f3f3] text-[12px] text-[#222]">
      <span className="box-content w-[65px] whitespace-nowrap pl-[11px]">页面 1/1</span>
      <span className="w-[105px] whitespace-nowrap">宽度: 47.29 mm</span>
      <span className="w-[96px] whitespace-nowrap">高度: 3.75 mm</span>
      <span className="w-[84px] whitespace-nowrap">角度: 0 deg</span>
      <span className="whitespace-nowrap">简体中文(中国大陆)</span>
      <button aria-label="宏录制" className="ml-5"><Svg w={15} h={15}><path d="M6 12.500H1v-11h12.500V5M1 4.500h12.500M3.500 7.500h3M3.500 10h2" /><circle cx="10" cy="10" r="3.800" /><circle cx="10" cy="10" r="1.500" fill="#333" /></Svg></button>
      <div className="ml-auto flex items-center pr-2">
        <button aria-label="适应窗口"><Svg w={15} h={15}><rect x="4.500" y="4.500" width="6" height="6" strokeWidth="1.200" /><path d="M5.500 2.500l2-2 2 2M5.500 12.500l2 2 2-2M2.500 5.500l-2 2 2 2M12.500 5.500l2 2-2 2" strokeWidth="1.200" /></Svg></button>
        <button aria-label="切换窗口" className="ml-[13px]"><Svg w={15} h={15}><path d="M1.500 4.500V.8h10V4M1.500 3h10M1.500 4v5M6 5.500h8v8h-4M6 8h8M6 5.500v2M4 6c-3 3-1 6 4 6M5.500 9.500L8.200 12 5.500 14.500" strokeWidth="1.200" /></Svg></button>
        <button aria-label="演示模式" className="ml-[25px]"><Svg w={15} h={15}><path d="M0 1.500h15M1.500 1.500v8h12v-8M7.500 9.500v5" strokeWidth="1.200" /></Svg></button>
        <button aria-label="缩小" className="ml-[17px]"><Svg w={9} h={9}><path d="M0 4.500h9" strokeWidth="1.300" /></Svg></button>
        <input type="range" aria-label="缩放" defaultValue={83} style={{ background: "linear-gradient(#777,#777) 0 50%/100% 1px no-repeat, linear-gradient(#777,#777) 50% 50%/1px 7px no-repeat" }} className="ml-[5px] h-3 w-[100px] appearance-none [&::-webkit-slider-thumb]:h-[11px] [&::-webkit-slider-thumb]:w-[5px] [&::-webkit-slider-thumb]:appearance-none [&::-webkit-slider-thumb]:bg-[#555]" />
        <button aria-label="放大" className="ml-1"><Svg w={9} h={9}><path d="M0 4.500h9M4.500 0v9" strokeWidth="1.300" /></Svg></button>
        <span className="ml-[13px] w-8">296%</span>
      </div>
    </footer>
  );
}

const Task = ({ label, run, active, children }: Kids & { label: string; run?: boolean; active?: boolean }) => (
  <button aria-label={label} className={`relative flex h-10 w-12 items-center justify-center ${active ? "bg-[#4d5663]" : ""}`}>
    {children}
    {run && <span className={`absolute bottom-0 h-[2px] bg-[#76b9ed] ${active ? "w-12" : "w-10"}`} />}
  </button>
);

function Taskbar() {
  return (
    <nav className="relative flex h-10 items-center bg-linear-to-r from-[#20252d] to-[#2b323c] text-[12px] text-white">
      <Task label="开始"><Svg><path d="M0 2.300L6.700 1.300V7.600H0zM7.600 1.200L16 0v7.600H7.600zM0 8.500h6.700v6.300L0 13.800zM7.600 8.500H16V16l-8.400-1.200z" fill="#fff" stroke="none" /></Svg></Task>
      <Task label="搜索"><Glass size={22} stroke="#fff" sw={1.5} /></Task>
      <Task label="任务视图"><Svg w={16} h={18}><path d="M1 5.500h9v7H1zM1 1v2h9V1M1 17v-2h9v2M14.500 1v2M14.500 10v7" stroke="#fff" strokeWidth="1.200" /><path d="M13 5h3v3h-3z" fill="#fff" stroke="none" /></Svg></Task>
      <div className="ml-[3px] flex gap-px">
        <Task label="Edge">
          <Svg w={24} h={24}><g stroke="none"><circle cx="12" cy="12" r="12" fill="#1577d0" /><path d="M.3 10C1.500 4 6 0 12 0c7 0 12 5 12 10.500 0 4-3 6-6 6-2.500 0-3.500-1-3.500-2s1-1.500 1-3.500C15.500 8.500 13 6 9 6 5 6 2 7.500.3 10z" fill="#35c1b8" /><path d="M12 0c7 0 12 5 12 10.500 0 4-3 6-6 6-2.500 0-3.500-1-3.500-2s1-1.500 1-3.500C18 8 17 3 12 0z" fill="#63d86b" /><path d="M8.500 11.500C7 16 10 21 16 21c2 0 4-.8 5.500-2-2 3.500-5.500 5-9 5C7 24 5 19 5 16.500c0-2.500 1.500-4.500 3.500-5z" fill="#0d4f9e" /></g></Svg>
        </Task>
        <Task label="文件资源管理器"><Svg w={22} h={20}><g stroke="none"><path d="M0 1h9l2 2h11v16H0z" fill="#e5a82b" /><path d="M0 5h22v14H0z" fill="#fcd462" /><path d="M4 19v-7q0-1 1-1h12q1 0 1 1v7h-4v-4H8v4z" fill="#3b95dc" /></g></Svg></Task>
        <Task label="QQ" run>
          <Svg w={24} h={24}><g stroke="none"><rect width="24" height="24" rx="4" fill="#fff" /><path d="M5 17c0-3 1-4 2-5V8a5 6 0 0 1 10 0v4c1 1 2 2 2 5q-1 1-2-1l-2 5H9l-2-5q-1 2-2 1z" fill="#111" /><ellipse cx="12" cy="16.500" rx="4" ry="4.500" fill="#fff" /><path d="M7 11q5 3 10 0v2q-5 3-10 0z" fill="#e5202c" /><ellipse cx="9" cy="21.500" rx="3" ry="1.300" fill="#f5a51b" /><ellipse cx="15" cy="21.500" rx="3" ry="1.300" fill="#f5a51b" /><ellipse cx="10.200" cy="6" rx="1.200" ry="1.700" fill="#fff" /><ellipse cx="13.800" cy="6" rx="1.200" ry="1.700" fill="#fff" /><ellipse cx="12" cy="9" rx="3" ry="1" fill="#f5a51b" /></g></Svg>
        </Task>
        <Task label="微信" run>
          <Svg w={24} h={22}><g stroke="none"><path d="M8.500 1C4 1 .5 4 .5 7.500c0 2 1 4 3 5L3 15l3-1.500q5 1 8.500-2.500Q17 8 16 5 14 1 8.500 1z" fill="#2dc465" /><path d="M17 8.500c-4 0-6.500 2.500-6.500 5.500s3 5.500 6.500 5.500q1 0 2-.3l2.500 1.300-.6-2.200q2.600-1.600 2.600-4.300c0-3-2.700-5.500-6.500-5.500z" fill="#eee" /><circle cx="6" cy="5.800" r="1.100" fill="#125c2d" /><circle cx="11" cy="5.800" r="1.100" fill="#125c2d" /><circle cx="15" cy="12.500" r=".9" fill="#777" /><circle cx="19" cy="12.500" r=".9" fill="#777" /></g></Svg>
        </Task>
        <Task label="应用" run><Svg w={22} h={22}><rect x=".5" y=".5" width="21" height="21" fill="#c22a2a" stroke="#f3c4c4" strokeDasharray="1.500 1" /><path d="M4 4h14v14H4z" fill="#1d0303" stroke="#f5bcbc" strokeDasharray="1.500 1" /><path d="M7 7h8.500v5.500H12M7.500 7v8.500H10M11 10.500h1.500" stroke="#f3a0a0" strokeWidth="1.500" /></Svg></Task>
        <Task label="Visio" run active><Visio s={24} /></Task>
      </div>
      <div className="ml-auto flex h-10 items-center pr-[14px]">
        <button aria-label="显示隐藏的图标"><Svg w={12} h={8}><path d="M1 7l5-5 5 5" stroke="#fff" strokeWidth="1.300" /></Svg></button>
        <Svg w={17} h={17} className="ml-[10px]"><path d="M3 2h11v11H3zM6 6q2-3 5 0M11 9q-2 3-5 0" stroke="#fff" strokeWidth="1.200" /><circle cx="13" cy="13.500" r="3.300" fill="#f7941d" stroke="none" /></Svg>
        <Svg w={17} h={16} className="ml-2"><path d="M3.500 5.500v6h12v-9h-9M9.500 11.500v3M6 14.500h7M1 1h4v4H1z" stroke="#fff" strokeWidth="1.200" /></Svg>
        <Svg w={17} h={16} className="ml-2"><path d="M1 5.500h2.500L7 2v12l-3.500-3.500H1zM9 6q1.500 2 0 4M11 4q3 4 0 8" stroke="#fff" /><path d="M13 2q4.500 6 0 12" stroke="#777" /></Svg>
        <span className="ml-2">中</span>
        <Svg w={16} h={16} className="ml-[14px]"><rect width="16" height="16" rx="3" fill="#f04a15" stroke="none" /><path d="M12 4.500Q4 2 4.500 5.500C5 8 11.500 7.500 11.500 10.500Q11 13.500 4 11.500" stroke="#fff" strokeWidth="2" /></Svg>
        <div className="ml-3 w-[68px] text-center leading-[18px]"><div>22:29</div><div>2025/3/1</div></div>
        <button aria-label="通知" className="relative ml-4"><Svg w={26} h={26}><path d="M1 3h15v13H7l-3 3v-3H1z" fill="#fff" stroke="none" /><path d="M3.500 6.500h10M3.500 9.500h10M3.500 12.500h6" stroke="#2b323c" /><circle cx="15.500" cy="17" r="8" fill="#3c434d" stroke="#777" /></Svg><span className="absolute left-[12px] top-[9px] font-bold leading-4">2</span></button>
      </div>
      <span className="pointer-events-none absolute bottom-[12px] right-1 whitespace-nowrap font-['Liberation_Sans'] text-[34px] leading-[40px] text-white/60 [text-shadow:1px_1px_1px_rgba(0,0,0,0.6)]">CSDN @xemsyd</span>
    </nav>
  );
}

/* ---------- page ---------- */
const tabs = ["文件", "开始", "插入", "绘图", "设计", "数据", "流程", "审阅", "视图", "开发工具", "帮助", "甘特图"];

export default function App() {
  return (
    <div className="flex h-screen min-h-[720px] flex-col overflow-hidden bg-[#efefef] font-['Noto_Sans','Noto_Sans_CJK_SC',sans-serif] text-[12px] text-[#222]">
      <header className="flex h-12 shrink-0 items-center pl-4">
        <Visio />
        <button aria-label="保存" className="ml-4"><Svg><path d="M.8.800h14.400v14.400H.8z" fill="#d6a0e0" stroke="#8f2ca0" strokeWidth="1.500" /><path d="M3.500 1v5.500h9V1M4.500 15v-5h7v5" fill="#fff" stroke="#8f2ca0" strokeWidth="1.200" /></Svg></button>
        <button aria-label="撤消" className="ml-[13px] flex items-center gap-[5px]"><Svg w={16} h={17}><path d="M1.500 1v6h6M2 6.500C4 2.500 9 .5 12.500 3.500c3 3 1.500 6 0 7.500L6.500 16.500" strokeWidth="1.400" /></Svg><Caret /></button>
        <button aria-label="重做" className="ml-[11px]"><Svg w={16} h={17}><path d="M1 1h5v5M5.500 1.500C1 4 0 8.500 2 12c3 5 10 4.500 12-.5 1.500-4 0-7.500-4-9.500" strokeWidth="1.400" /></Svg></button>
        <button aria-label="自定义快速访问工具栏" className="ml-4"><Svg w={8} h={8}><path d="M1 1h6M1.500 4l2.500 2.500L6.500 4" strokeWidth="1.300" /></Svg></button>
        <h1 className="ml-[17px] text-[12px]">Visio Professional</h1>
        <button className="ml-auto h-[19px] w-[46px] rounded-sm bg-[#222] leading-[19px] text-white">登录</button>
        <div className="flex pl-[10px] *:flex *:w-12 *:justify-center">
          <button aria-label="最小化"><Min /></button>
          <button aria-label="还原"><Svg w={12} h={12}><path d="M1.500 3.500h7v7h-7zM4 1.500h5q1.500 0 1.500 1.500v5" stroke="#222" /></Svg></button>
          <button aria-label="关闭"><Close /></button>
        </div>
      </header>
      <nav className="flex h-[30px] shrink-0 items-start pl-[18px] pr-3 text-[13px]">
        <div className="flex gap-[19px]">
          {tabs.map((t, i) => (
            <button key={t} className={`border-b-2 pt-1 leading-[20px] ${i === 1 ? "ml-1 border-[#1a4fa8] font-bold" : "border-transparent"}`}>{t}</button>
          ))}
        </div>
        <label className="ml-9 flex items-center gap-[11px] pt-1"><Glass />
          <input aria-label="操作说明搜索" placeholder="操作说明搜索" className="w-40 bg-transparent leading-[20px] placeholder:text-[#555]" />
        </label>
        <button className="ml-auto mt-[3px] flex h-6 w-[54px] items-center justify-center gap-1 rounded bg-[#185abd] text-white"><Svg w={12} h={14}><path d="M4 5H.8v8h10V9M4 9q0-4 5-4.500V2l3 3.500-3 3.500V6.800Q6 7 4 9z" stroke="#fff" /></Svg>共享</button>
      </nav>
      <div className="shrink-0"><Ribbon /></div>
      <div className="flex h-7 shrink-0 items-center border-b-2 border-[#b4b4b4] bg-[#fdfdfd] pl-[9px] pr-1">
        <button aria-label="取消" disabled><Svg w={14} h={14}><path d="M1 1l12 12M13 1L1 13" stroke="#b0b0b0" strokeWidth="1.400" /></Svg></button>
        <button aria-label="输入" disabled className="ml-2"><Svg w={17} h={13}><path d="M1 7l5 5L16 1" stroke="#b0b0b0" strokeWidth="1.500" /></Svg></button>
        <input aria-label="公式" className="ml-[5px] h-4 flex-1 border-l border-[#c4c4c4] bg-transparent" />
        <i className="font-['Liberation_Serif'] text-[19px] text-[#999]">fx</i>
      </div>
      <main className="flex min-h-0 flex-1">
        <div className="relative flex min-w-0 flex-1 flex-col">
          <DrawingWindow />
          <SheetWindow />
          <ContextMenu />
          <MiniToolbar />
          <div role="tooltip" className="absolute left-[808px] top-[162px] whitespace-nowrap border border-[#c6c6c6] bg-white py-1 pl-1 pr-2 leading-[18px] text-[#666] shadow">置于顶层 (Shift+Ctrl+F)</div>
          <Annotations />
        </div>
        <FormatPane />
      </main>
      <div className="shrink-0"><StatusBar /><Taskbar /></div>
    </div>
  );
}
